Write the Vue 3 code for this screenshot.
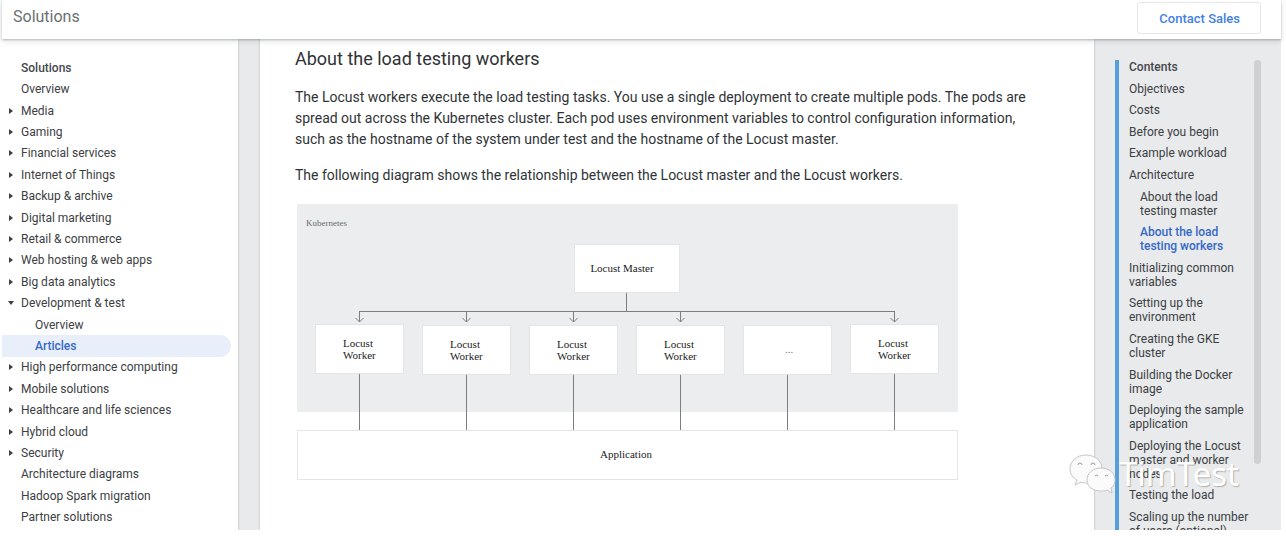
<script setup>
const navItems = [
  { label: 'Solutions', heading: true },
  { label: 'Overview' },
  { label: 'Media', arrow: 'right' },
  { label: 'Gaming', arrow: 'right' },
  { label: 'Financial services', arrow: 'right' },
  { label: 'Internet of Things', arrow: 'right' },
  { label: 'Backup & archive', arrow: 'right' },
  { label: 'Digital marketing', arrow: 'right' },
  { label: 'Retail & commerce', arrow: 'right' },
  { label: 'Web hosting & web apps', arrow: 'right' },
  { label: 'Big data analytics', arrow: 'right' },
  { label: 'Development & test', arrow: 'down' },
  { label: 'Overview', nested: true },
  { label: 'Articles', nested: true, active: true },
  { label: 'High performance computing', arrow: 'right' },
  { label: 'Mobile solutions', arrow: 'right' },
  { label: 'Healthcare and life sciences', arrow: 'right' },
  { label: 'Hybrid cloud', arrow: 'right' },
  { label: 'Security', arrow: 'right' },
  { label: 'Architecture diagrams' },
  { label: 'Hadoop Spark migration' },
  { label: 'Partner solutions' },
]

const contents = [
  { label: 'Contents', heading: true },
  { label: 'Objectives' },
  { label: 'Costs' },
  { label: 'Before you begin' },
  { label: 'Example workload' },
  { label: 'Architecture' },
  { label: 'About the load testing master', nested: true },
  { label: 'About the load testing workers', nested: true, active: true },
  { label: 'Initializing common variables' },
  { label: 'Setting up the environment' },
  { label: 'Creating the GKE cluster' },
  { label: 'Building the Docker image' },
  { label: 'Deploying the sample application' },
  { label: 'Deploying the Locust master and worker nodes' },
  { label: 'Testing the load' },
  { label: 'Scaling up the number of users (optional)' },
]

const workers = [
  { x: 18, y: 120, named: true },
  { x: 125, y: 121, named: true },
  { x: 232, y: 121, named: true },
  { x: 339, y: 121, named: true },
  { x: 446, y: 121, named: false },
  { x: 553, y: 120, named: true },
]
</script>

<template>
  <div class="page">
    <header class="topbar">
      <span class="product">Solutions</span>
      <button type="button" class="contact">Contact Sales</button>
    </header>

    <div class="body">
      <nav class="sidebar" aria-label="Solutions">
        <ul class="nav-list">
          <li
            v-for="(item, i) in navItems"
            :key="i"
            class="nav-item"
            :class="{ heading: item.heading, nested: item.nested, active: item.active }"
          >
            <svg v-if="item.arrow === 'right'" class="arrow" viewBox="0 0 6 6" aria-hidden="true">
              <path d="M1 0 L5 3 L1 6 Z" />
            </svg>
            <svg v-else-if="item.arrow === 'down'" class="arrow" viewBox="0 0 6 6" aria-hidden="true">
              <path d="M0 1 L6 1 L3 5 Z" />
            </svg>
            <span v-else class="arrow"></span>
            <span v-if="item.heading">{{ item.label }}</span>
            <a v-else href="#">{{ item.label }}</a>
          </li>
        </ul>
      </nav>

      <main class="article">
        <h2>About the load testing workers</h2>
        <p>
          The Locust workers execute the load testing tasks. You use a single deployment to create multiple pods. The pods are
          spread out across the Kubernetes cluster. Each pod uses environment variables to control configuration information,
          such as the hostname of the system under test and the hostname of the Locust master.
        </p>
        <p>The following diagram shows the relationship between the Locust master and the Locust workers.</p>
        <svg class="diagram" viewBox="0 0 661 276" role="img" aria-label="Locust master and workers">
          <rect width="661" height="208" fill="#ebedee" />
          <text class="zone" x="9" y="22">Kubernetes</text>
          <g class="box">
            <rect x="277.5" y="40.5" width="105" height="48" />
            <rect x="0.5" y="226.5" width="660" height="49" />
            <rect v-for="w in workers" :key="w.x" :x="w.x + 0.5" :y="w.y + 0.5" width="88" height="49" />
          </g>
          <g class="wire">
            <path d="M329.5 89 V107.5 M62 107.5 H598" />
            <template v-for="w in workers" :key="w.x">
              <path v-if="w.named" :d="`M${w.x + 44.5} 107 V118 m-4 -4 l4 4 l4 -4`" />
              <path :d="`M${w.x + 44.5} ${w.y + 50} V226`" />
            </template>
          </g>
          <text x="325" y="68" text-anchor="middle">Locust Master</text>
          <template v-for="w in workers" :key="w.x">
            <template v-if="w.named">
              <text :x="w.x + 28" :y="w.y + 23">Locust</text>
              <text :x="w.x + 28" :y="w.y + 35">Worker</text>
            </template>
            <text v-else class="more" :x="w.x + 46" :y="w.y + 28" text-anchor="middle">...</text>
          </template>
          <text x="329" y="254" text-anchor="middle">Application</text>
        </svg>
      </main>

      <aside class="toc">
        <ul class="toc-list">
          <li
            v-for="item in contents"
            :key="item.label"
            :class="{ heading: item.heading, nested: item.nested, active: item.active }"
          >
            <span v-if="item.heading">{{ item.label }}</span>
            <a v-else href="#">{{ item.label }}</a>
          </li>
        </ul>
        <div class="scroll-thumb"></div>
      </aside>
    </div>

    <div class="watermark">
      <svg viewBox="0 0 48 42" aria-hidden="true">
        <g class="bubble">
          <path d="M17 2 C8 2 1 8 1 16 C1 21 4 25 8 27 L6 32 L12 29 C14 30 16 30 18 30 C27 30 33 24 33 16 C33 8 26 2 17 2 Z" />
          <path d="M32 15 C24 15 18 20 18 27 C18 34 24 38 32 38 C34 38 36 38 38 37 L43 40 L42 35 C45 33 46 30 46 27 C46 20 40 15 32 15 Z" />
        </g>
        <g class="eyes">
          <path d="M9 12 a2 2 0 0 1 4 0 M22 12 a2 2 0 0 1 4 0 M26 23 a2 2 0 0 1 3 0 M36 23 a2 2 0 0 1 3 0" />
        </g>
      </svg>
      <span>TimTest</span>
    </div>
  </div>
</template>

<style>
body {
  background: #fff;
}
</style>

<style scoped>
.page {
  position: relative;
  box-sizing: border-box;
  height: 100vh;
  min-height: 536px;
  padding: 0 5px 6px 2px;
  display: flex;
  flex-direction: column;
  overflow: hidden;
  background: #fff;
  color: #3c4043;
  font-family: Roboto, "Liberation Sans", sans-serif;
}

a {
  color: inherit;
  text-decoration: none;
}

ul {
  list-style: none;
  margin: 0;
  padding: 0;
}

.topbar {
  position: relative;
  z-index: 1;
  flex: none;
  box-sizing: border-box;
  height: 39px;
  padding: 2px 20px 6px 11px;
  display: flex;
  justify-content: space-between;
  align-items: center;
  background: #fff;
  box-shadow: 0 1px 2px rgba(60, 64, 67, 0.3), 0 2px 6px rgba(60, 64, 67, 0.15);
}

.product {
  font-size: 16px;
  line-height: 30px;
  color: #6b6f74;
  align-self: flex-start;
}

.contact {
  height: 32px;
  padding: 2px 20px 0 21px;
  border: 1px solid #e4e6e9;
  border-radius: 3px;
  background: #fff;
  color: #4280e2;
  font: 500 13px Roboto, "Liberation Sans", sans-serif;
}

.body {
  flex: 1;
  min-height: 0;
  display: flex;
  overflow: hidden;
  background: #e8eaec;
}

.sidebar {
  flex: none;
  box-sizing: border-box;
  width: 236px;
  margin-right: 22px;
  padding: 18px 7px 2px 0;
  background: #fff;
  box-shadow: 0 0 2px rgba(60, 64, 67, 0.35);
}

.nav-list {
  height: 100%;
  display: flex;
  flex-direction: column;
  font-size: 12px;
}

.nav-item {
  flex: 1;
  display: flex;
  align-items: center;
  padding-left: 6px;
}

.arrow {
  flex: none;
  width: 6px;
  height: 6px;
  margin-right: 7px;
  fill: #3c4043;
}

.nav-item.nested {
  padding-left: 20px;
}

.nav-item.active {
  border-radius: 0 11px 11px 0;
  background: #e9eefb;
}

.heading {
  font-weight: 500;
  color: #44474b;
}

.active {
  font-weight: 500;
  color: #3569c8;
}

.article {
  flex: 1;
  min-width: 0;
  padding: 8px 50px 0 35px;
  background: #fff;
  box-shadow: 0 0 2px rgba(60, 64, 67, 0.35);
}

h2 {
  margin: 0 0 16px;
  font-size: 18px;
  font-weight: 400;
  line-height: 24px;
  color: #2f3235;
}

p {
  margin: 0 0 15px;
  font-size: 14px;
  line-height: 21px;
  color: #303336;
}

.diagram {
  display: block;
  width: 661px;
  max-width: 100%;
  margin: 18px 0 0 2px;
  font-family: "Liberation Serif", serif;
  font-size: 11px;
  fill: #222;
}

.zone {
  font-size: 9px;
  fill: #6a6d70;
}

.more {
  fill: #777;
}

.box {
  fill: #fff;
  stroke: #e3e5e6;
}

.wire {
  fill: none;
  stroke: #7c7e80;
}

.toc {
  flex: none;
  box-sizing: border-box;
  width: 187px;
  padding: 21px 20px 0 21px;
  display: flex;
  align-items: stretch;
  overflow: hidden;
}

.toc-list {
  flex: 1;
  margin-bottom: -8px;
  padding-right: 4px;
  padding-left: 10px;
  border-left: 4px solid #559fdc;
  display: flex;
  flex-direction: column;
  justify-content: space-between;
  font-size: 12px;
  line-height: 14px;
}

.toc-list .nested {
  padding-left: 11px;
}

.scroll-thumb {
  flex: none;
  width: 7px;
  height: 86%;
  border-radius: 4px;
  background: #cfd0d3;
}

.watermark {
  position: absolute;
  z-index: 2;
  right: 47px;
  bottom: 41px;
  display: flex;
  align-items: center;
  gap: 2px;
  color: #fff;
  font: 400 33px "Noto Sans", sans-serif;
  line-height: 42px;
  text-shadow: 1px 1px 1px rgba(0, 0, 0, 0.25);
  pointer-events: none;
}

.watermark svg {
  width: 48px;
  height: 42px;
}

.bubble {
  fill: #fbfbfb;
  stroke: #c4c6c8;
}

.eyes {
  fill: none;
  stroke: #96989a;
}
</style>
